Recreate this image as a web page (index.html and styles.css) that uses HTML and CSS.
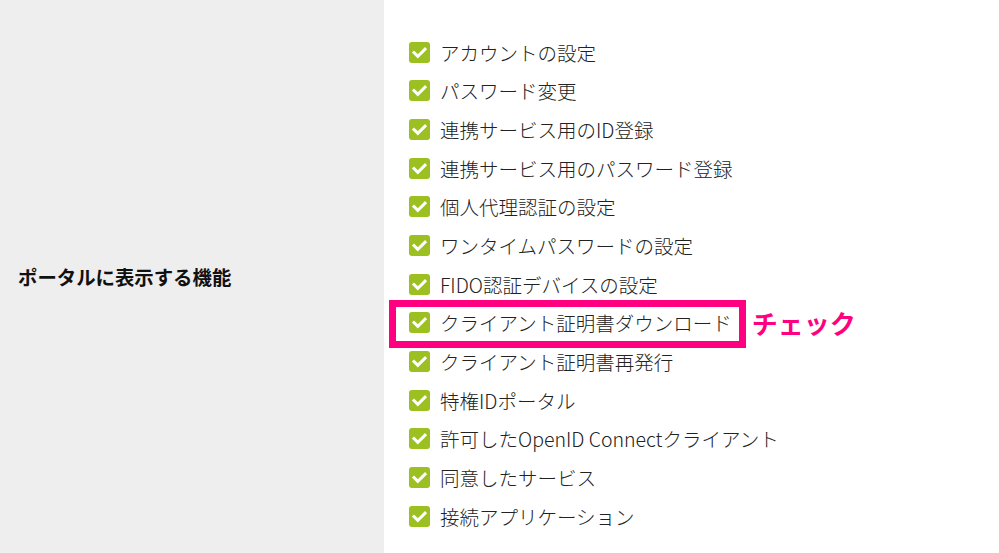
FILE: index.html
```html
<!DOCTYPE html>
<html lang="ja">
<head>
<meta charset="utf-8">
<link rel="stylesheet" href="styles.css">
</head>
<body>
<div class="setting-row">
  <div class="label-cell">ポータルに表示する機能</div>
  <div class="value-cell">
    <ul class="feature-list">
      <li class="feature"><span class="check"><svg viewBox="0 0 21 21" width="21" height="21"><rect width="21" height="21" rx="3" fill="#9cbf21"/><path d="M5 10.5l3.8 3.8L16 7.2" fill="none" stroke="#fff" stroke-width="3" stroke-linecap="square"/></svg></span><span class="name">アカウントの設定</span></li>
      <li class="feature"><span class="check"><svg viewBox="0 0 21 21" width="21" height="21"><rect width="21" height="21" rx="3" fill="#9cbf21"/><path d="M5 10.5l3.8 3.8L16 7.2" fill="none" stroke="#fff" stroke-width="3" stroke-linecap="square"/></svg></span><span class="name">パスワード変更</span></li>
      <li class="feature"><span class="check"><svg viewBox="0 0 21 21" width="21" height="21"><rect width="21" height="21" rx="3" fill="#9cbf21"/><path d="M5 10.5l3.8 3.8L16 7.2" fill="none" stroke="#fff" stroke-width="3" stroke-linecap="square"/></svg></span><span class="name">連携サービス用のID登録</span></li>
      <li class="feature"><span class="check"><svg viewBox="0 0 21 21" width="21" height="21"><rect width="21" height="21" rx="3" fill="#9cbf21"/><path d="M5 10.5l3.8 3.8L16 7.2" fill="none" stroke="#fff" stroke-width="3" stroke-linecap="square"/></svg></span><span class="name">連携サービス用のパスワード登録</span></li>
      <li class="feature"><span class="check"><svg viewBox="0 0 21 21" width="21" height="21"><rect width="21" height="21" rx="3" fill="#9cbf21"/><path d="M5 10.5l3.8 3.8L16 7.2" fill="none" stroke="#fff" stroke-width="3" stroke-linecap="square"/></svg></span><span class="name">個人代理認証の設定</span></li>
      <li class="feature"><span class="check"><svg viewBox="0 0 21 21" width="21" height="21"><rect width="21" height="21" rx="3" fill="#9cbf21"/><path d="M5 10.5l3.8 3.8L16 7.2" fill="none" stroke="#fff" stroke-width="3" stroke-linecap="square"/></svg></span><span class="name">ワンタイムパスワードの設定</span></li>
      <li class="feature"><span class="check"><svg viewBox="0 0 21 21" width="21" height="21"><rect width="21" height="21" rx="3" fill="#9cbf21"/><path d="M5 10.5l3.8 3.8L16 7.2" fill="none" stroke="#fff" stroke-width="3" stroke-linecap="square"/></svg></span><span class="name">FIDO認証デバイスの設定</span></li>
      <li class="feature highlighted"><span class="check"><svg viewBox="0 0 21 21" width="21" height="21"><rect width="21" height="21" rx="3" fill="#9cbf21"/><path d="M5 10.5l3.8 3.8L16 7.2" fill="none" stroke="#fff" stroke-width="3" stroke-linecap="square"/></svg></span><span class="name">クライアント証明書ダウンロード</span><span class="note">チェック</span></li>
      <li class="feature"><span class="check"><svg viewBox="0 0 21 21" width="21" height="21"><rect width="21" height="21" rx="3" fill="#9cbf21"/><path d="M5 10.5l3.8 3.8L16 7.2" fill="none" stroke="#fff" stroke-width="3" stroke-linecap="square"/></svg></span><span class="name">クライアント証明書再発行</span></li>
      <li class="feature"><span class="check"><svg viewBox="0 0 21 21" width="21" height="21"><rect width="21" height="21" rx="3" fill="#9cbf21"/><path d="M5 10.5l3.8 3.8L16 7.2" fill="none" stroke="#fff" stroke-width="3" stroke-linecap="square"/></svg></span><span class="name">特権IDポータル</span></li>
      <li class="feature"><span class="check"><svg viewBox="0 0 21 21" width="21" height="21"><rect width="21" height="21" rx="3" fill="#9cbf21"/><path d="M5 10.5l3.8 3.8L16 7.2" fill="none" stroke="#fff" stroke-width="3" stroke-linecap="square"/></svg></span><span class="name">許可したOpenID Connectクライアント</span></li>
      <li class="feature"><span class="check"><svg viewBox="0 0 21 21" width="21" height="21"><rect width="21" height="21" rx="3" fill="#9cbf21"/><path d="M5 10.5l3.8 3.8L16 7.2" fill="none" stroke="#fff" stroke-width="3" stroke-linecap="square"/></svg></span><span class="name">同意したサービス</span></li>
      <li class="feature"><span class="check"><svg viewBox="0 0 21 21" width="21" height="21"><rect width="21" height="21" rx="3" fill="#9cbf21"/><path d="M5 10.5l3.8 3.8L16 7.2" fill="none" stroke="#fff" stroke-width="3" stroke-linecap="square"/></svg></span><span class="name">接続アプリケーション</span></li>
    </ul>
  </div>
</div>
</body>
</html>
```
FILE: styles.css
```css
html, body {
  margin: 0;
  padding: 0;
  background: #fff;
}
body {
  font-family: "Noto Sans CJK JP", "Noto Sans", sans-serif;
  color: #222;
}
.setting-row {
  display: flex;
  min-height: 553px;
}
.label-cell {
  width: 366px;
  flex: none;
  background: #eeeeee;
  padding-left: 18px;
  display: flex;
  align-items: center;
  font-size: 19.4px;
  font-weight: 700;
  color: #111;
}
.value-cell {
  flex: 1;
  padding: 33px 0 0 25px;
}
.feature-list {
  list-style: none;
  margin: 0;
  padding: 0;
}
.feature {
  display: flex;
  align-items: center;
  height: 38.67px;
  font-size: 19.5px;
  font-weight: 300;
  position: relative;
}
.check {
  display: flex;
  width: 21px;
  height: 21px;
  margin-right: 10px;
  flex: none;
}
.check svg {
  display: block;
}
.highlighted::before {
  content: "";
  position: absolute;
  left: -20px;
  top: -4px;
  width: 343px;
  height: 34px;
  border: 7px solid #ff0080;
}
.note {
  margin-left: 20px;
  font-size: 26px;
  font-weight: 700;
  color: #ff0080;
}
```
